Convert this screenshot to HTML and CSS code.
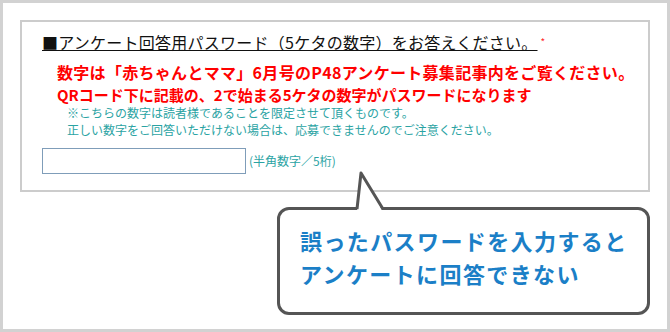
FILE: index.html
```html
<!DOCTYPE html>
<html lang="ja">
<head>
    <meta charset="UTF-8">
    <title>アンケート回答用パスワード</title>
    <link rel="stylesheet" href="styles.css">
</head>
<body>
    <div class="frame">
        <!-- Password form -->
        <div class="form-box">
            <p class="title"><span class="title-text">■アンケート回答用パスワード（5ケタの数字）をお答えください。</span><span class="required">*</span></p>
            <p class="note-red big">数字は「赤ちゃんとママ」6月号のP48アンケート募集記事内をご覧ください。</p>
            <p class="note-red small">QRコード下に記載の、2で始まる5ケタの数字がパスワードになります</p>
            <p class="note-teal">※こちらの数字は読者様であることを限定させて頂くものです。</p>
            <p class="note-teal">正しい数字をご回答いただけない場合は、応募できませんのでご注意ください。</p>
            <div class="input-row">
                <input type="text" class="pw-input">
                <span class="hint">(半角数字／5桁)</span>
            </div>
        </div>

        <!-- Speech bubble -->
        <div class="bubble">
            <svg class="bubble-tail" width="32" height="42" viewBox="0 0 32 42">
                <polygon points="3,42 7,3 29,42" fill="#fff"/>
                <polyline points="3,39 7,3 29,39" fill="none" stroke="#555" stroke-width="3" stroke-linejoin="round"/>
            </svg>
            <p>誤ったパスワードを入力すると</p>
            <p>アンケートに回答できない</p>
        </div>
    </div>
</body>
</html>
```
FILE: styles.css
```css
* {
    margin: 0;
    padding: 0;
    box-sizing: border-box;
}

body {
    font-family: "Noto Sans CJK JP", "Noto Sans", sans-serif;
    background-color: #fff;
}

.frame {
    width: 670px;
    height: 332px;
    border: 3px solid #d2d2d2;
    padding: 17px;
}

/* Form box */
.form-box {
    border: 2px solid #cccccc;
    padding: 10px 20px 16px;
}

.title {
    font-size: 16px;
    line-height: 20px;
    letter-spacing: 0.25px;
    color: #111;
    white-space: nowrap;
}

.title-text {
    text-decoration: underline;
    text-decoration-thickness: 1px;
}

.required {
    color: #ff2a2a;
    font-size: 10px;
    vertical-align: top;
    margin-left: 3px;
}

.note-red {
    color: #ff0000;
    font-weight: bold;
    padding-left: 15px;
    white-space: nowrap;
}

.note-red.big {
    margin-top: 8px;
    font-size: 16px;
    line-height: 24px;
    letter-spacing: 0.3px;
}

.note-red.small {
    margin-top: 2px;
    font-size: 15px;
    line-height: 18px;
}

.note-teal {
    color: #2aa3a3;
    font-size: 12px;
    line-height: 17px;
    padding-left: 25px;
    white-space: nowrap;
}

.input-row {
    margin-top: 10px;
    display: flex;
    align-items: center;
    gap: 3px;
}

.pw-input {
    width: 204px;
    height: 26px;
    border: 1px solid #7f9db9;
    background: #fff;
}

.hint {
    color: #2aa3a3;
    font-size: 12px;
    line-height: 16px;
}

/* Speech bubble */
.bubble {
    position: relative;
    width: 373px;
    margin: 15px 0 0 auto;
    border: 3px solid #555;
    border-radius: 12px;
    padding: 14px 10px 22px 20px;
    color: #1b7fc7;
    font-size: 22px;
    font-weight: bold;
    line-height: 33px;
    letter-spacing: 1.4px;
    white-space: nowrap;
}

.bubble-tail {
    position: absolute;
    left: 74px;
    top: -40px;
}
```
